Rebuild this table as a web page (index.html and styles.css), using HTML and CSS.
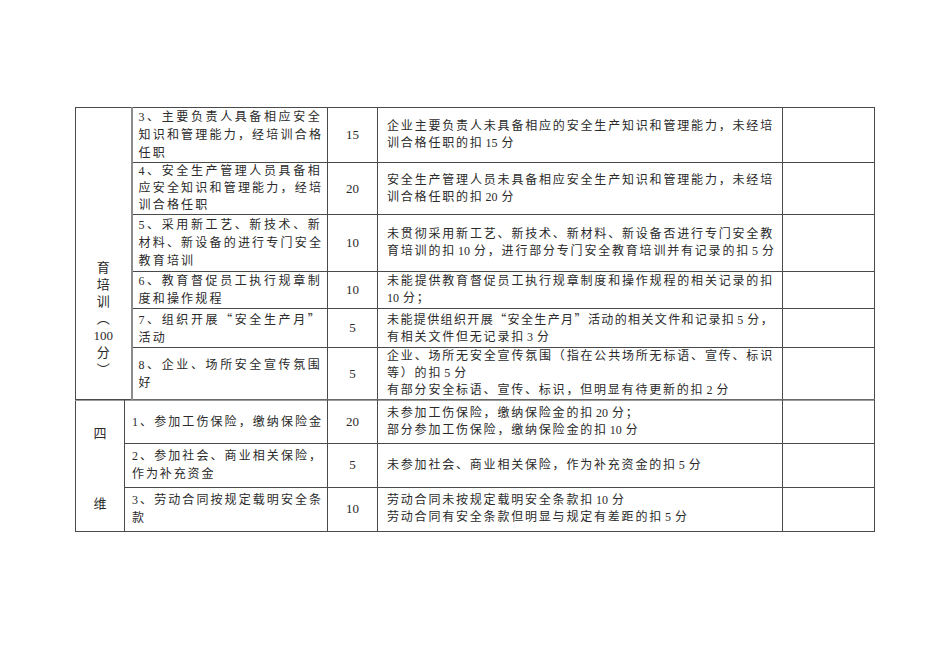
FILE: index.html
```html
<!DOCTYPE html>
<html lang="zh-CN">
<head>
<meta charset="utf-8">
<link rel="stylesheet" href="styles.css">
</head>
<body>
<div class="page">
  <table class="tbl top">
    <colgroup>
      <col class="c1a"><col class="c2a"><col class="c3"><col class="c4"><col class="c5">
    </colgroup>
    <tr class="r1">
      <td class="k" rowspan="6">
        <div class="vt">
          <span>育</span><span>培</span><span>训</span><span>︵</span><span class="num">100</span><span>分</span><span>︶</span>
        </div>
      </td>
      <td class="item"><span class="l f">3、主要负责人具备相应安全</span><span class="l f">知识和管理能力，经培训合格</span><span class="l">任职</span></td>
      <td class="sc">15</td>
      <td class="desc"><span class="l f">企业主要负责人未具备相应的安全生产知识和管理能力，未经培</span><span class="l">训合格任职的扣<span class="n">15</span>分</span></td>
      <td class="rm"></td>
    </tr>
    <tr class="r2">
      <td class="item tight"><span class="l f">4、安全生产管理人员具备相</span><span class="l f">应安全知识和管理能力，经培</span><span class="l">训合格任职</span></td>
      <td class="sc">20</td>
      <td class="desc"><span class="l f">安全生产管理人员未具备相应安全生产知识和管理能力，未经培</span><span class="l">训合格任职的扣<span class="n">20</span>分</span></td>
      <td class="rm"></td>
    </tr>
    <tr class="r3">
      <td class="item"><span class="l f">5、采用新工艺、新技术、新</span><span class="l f">材料、新设备的进行专门安全</span><span class="l">教育培训</span></td>
      <td class="sc">10</td>
      <td class="desc"><span class="l f">未贯彻采用新工艺、新技术、新材料、新设备否进行专门安全教</span><span class="l f">育培训的扣<span class="n">10</span>分，进行部分专门安全教育培训并有记录的扣<span class="n">5</span>分</span></td>
      <td class="rm"></td>
    </tr>
    <tr class="r4">
      <td class="item"><span class="l f">6、教育督促员工执行规章制</span><span class="l">度和操作规程</span></td>
      <td class="sc">10</td>
      <td class="desc"><span class="l f">未能提供教育督促员工执行规章制度和操作规程的相关记录的扣</span><span class="l"><span class="n n0">10</span>分；</span></td>
      <td class="rm"></td>
    </tr>
    <tr class="r5">
      <td class="item"><span class="l f">7、组织开展<span class="cj">“</span>安全生产月<span class="cj">”</span></span><span class="l">活动</span></td>
      <td class="sc">5</td>
      <td class="desc"><span class="l f ls">未能提供组织开展<span class="cj">“</span>安全生产月<span class="cj">”</span>活动的相关文件和记录扣<span class="n">5</span>分，</span><span class="l">有相关文件但无记录扣<span class="n">3</span>分</span></td>
      <td class="rm"></td>
    </tr>
    <tr class="r6">
      <td class="item"><span class="l f">8、企业、场所安全宣传氛围</span><span class="l">好</span></td>
      <td class="sc">5</td>
      <td class="desc"><span class="l f">企业、场所无安全宣传氛围（指在公共场所无标语、宣传、标识</span><span class="l">等）的扣<span class="n">5</span>分</span><span class="l">有部分安全标语、宣传、标识，但明显有待更新的扣<span class="n">2</span>分</span></td>
      <td class="rm"></td>
    </tr>
  </table>
  <table class="tbl bottom">
    <colgroup>
      <col class="c1b"><col class="c2b"><col class="c3"><col class="c4"><col class="c5">
    </colgroup>
    <tr class="r7">
      <td class="k2" rowspan="3">
        <div class="vt2"><span>四</span><span>维</span></div>
      </td>
      <td class="item item2"><span class="l f">1、参加工伤保险，缴纳保险金</span></td>
      <td class="sc">20</td>
      <td class="desc"><span class="l">未参加工伤保险，缴纳保险金的扣<span class="n">20</span>分；</span><span class="l">部分参加工伤保险，缴纳保险金的扣<span class="n">10</span>分</span></td>
      <td class="rm"></td>
    </tr>
    <tr class="r8">
      <td class="item item2"><span class="l f">2、参加社会、商业相关保险，</span><span class="l">作为补充资金</span></td>
      <td class="sc">5</td>
      <td class="desc"><span class="l">未参加社会、商业相关保险，作为补充资金的扣<span class="n">5</span>分</span></td>
      <td class="rm"></td>
    </tr>
    <tr class="r9">
      <td class="item item2"><span class="l f">3、劳动合同按规定载明安全条</span><span class="l">款</span></td>
      <td class="sc">10</td>
      <td class="desc"><span class="l">劳动合同未按规定载明安全条款扣<span class="n">10</span>分</span><span class="l">劳动合同有安全条款但明显与规定有差距的扣<span class="n">5</span>分</span></td>
      <td class="rm"></td>
    </tr>
  </table>
</div>
</body>
</html>
```
FILE: styles.css
```css
html, body {
  margin: 0;
  padding: 0;
  background: #ffffff;
}
body {
  font-family: "Liberation Serif", "Noto Sans CJK SC", serif;
  color: #2a2a2a;
  font-size: 12px;
}
.page {
  padding: 107px 0 0 75px;
}
.tbl {
  border-collapse: collapse;
  table-layout: fixed;
  width: 800px;
}
.tbl td {
  border: 1px solid #4a4a4a;
  padding: 0;
  vertical-align: middle;
  overflow: hidden;
}
.c1a { width: 56px; }
.c2a { width: 196px; }
.c1b { width: 49px; }
.c2b { width: 203px; }
.c3 { width: 50px; }
.c4 { width: 405px; }
.c5 { width: 92px; }

.r1 { height: 54px; }
.r2 { height: 52px; }
.r3 { height: 57px; }
.r4 { height: 35px; }
.r5 { height: 39px; }
.r6 { height: 51px; }
.r7 { height: 42px; }
.r8 { height: 43px; }
.r9 { height: 43px; }

.top tr:last-child td { border-bottom-color: #6a6a6a; }
.bottom tr:first-child td { border-top-color: #9a9a9a; }

.l {
  display: block;
  white-space: nowrap;
}
.l.f {
  text-align: justify;
  text-align-last: justify;
}
.l.ls {
  letter-spacing: 1.3px;
}
.n {
  letter-spacing: 0;
  margin: 0 4px 0 2px;
}
.n0 {
  margin-left: 0;
}
.cj {
  font-family: "Noto Sans CJK SC", sans-serif;
}
.item {
  padding: 0 5px 0 6px !important;
  letter-spacing: 2.2px;
  line-height: 18px;
}
.item.tight {
  line-height: 17px;
}
.top .item {
  border-left: 2px solid #8c8c8c;
}
.item2 {
  padding: 0 4px 0 7px !important;
  letter-spacing: 1.9px;
}
.sc {
  text-align: center;
  font-size: 13px;
}
.desc {
  padding: 0 8px 0 9px !important;
  letter-spacing: 1.8px;
  line-height: 17px;
}
.k {
  vertical-align: bottom !important;
}
.vt {
  display: flex;
  flex-direction: column;
  align-items: center;
  padding-bottom: 21px;
  line-height: 17px;
  font-size: 13px;
}
.vt2 {
  display: flex;
  flex-direction: column;
  justify-content: space-between;
  align-items: center;
  height: 130px;
  box-sizing: border-box;
  padding: 24px 0 19px;
  line-height: 17px;
  font-size: 13px;
}
```
